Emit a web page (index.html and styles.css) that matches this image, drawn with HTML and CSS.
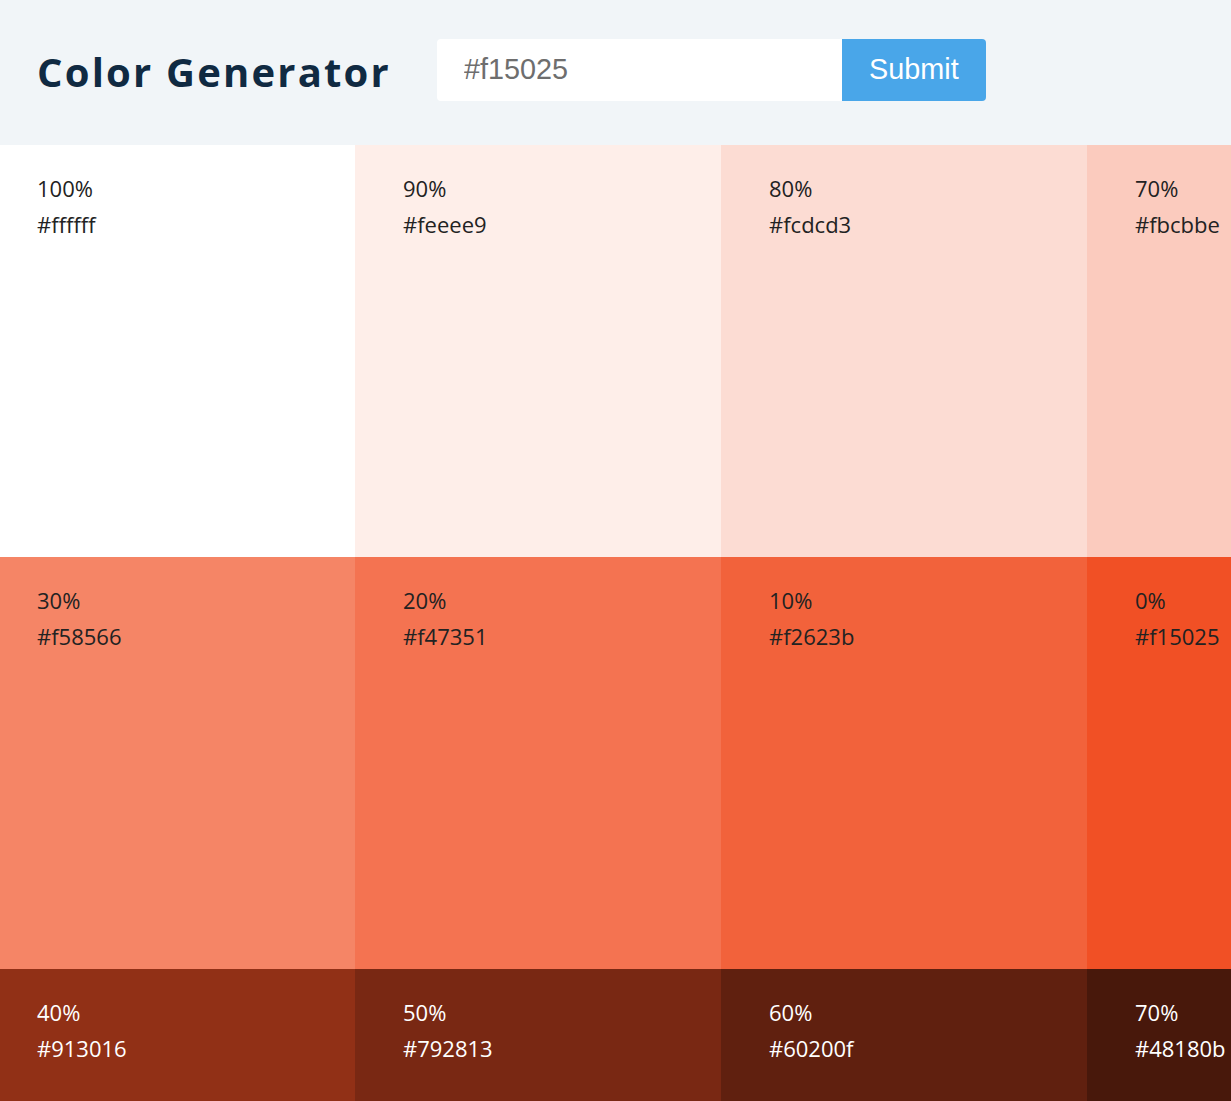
FILE: index.html
```html
<!DOCTYPE html>
<html>
<head>
<meta charset="utf-8">
<link rel="stylesheet" href="styles.css">
</head>
<body>
<section class="header">
  <h3 class="title">Color Generator</h3>
  <form class="form">
    <input class="field" type="text" placeholder="#f15025">
    <button class="btn" type="button">Submit</button>
  </form>
</section>
<section class="colors">
  <article class="color" style="background:#ffffff"><p>100%</p><p>#ffffff</p></article>
  <article class="color" style="background:#feeee9"><p>90%</p><p>#feeee9</p></article>
  <article class="color" style="background:#fcdcd3"><p>80%</p><p>#fcdcd3</p></article>
  <article class="color" style="background:#fbcbbe"><p>70%</p><p>#fbcbbe</p></article>
  <article class="color" style="background:#f58566"><p>30%</p><p>#f58566</p></article>
  <article class="color" style="background:#f47351"><p>20%</p><p>#f47351</p></article>
  <article class="color" style="background:#f2623b"><p>10%</p><p>#f2623b</p></article>
  <article class="color" style="background:#f15025"><p>0%</p><p>#f15025</p></article>
  <article class="color dark" style="background:#913016"><p>40%</p><p>#913016</p></article>
  <article class="color dark" style="background:#792813"><p>50%</p><p>#792813</p></article>
  <article class="color dark" style="background:#60200f"><p>60%</p><p>#60200f</p></article>
  <article class="color dark" style="background:#48180b"><p>70%</p><p>#48180b</p></article>
</section>
</body>
</html>
```
FILE: styles.css
```css
* { box-sizing: border-box; }
html, body { margin: 0; padding: 0; }
body {
  font-family: "Open Sans", "Noto Sans", sans-serif;
  color: #102a42;
  overflow: hidden;
  background: #fff;
}
.header {
  background: #f1f5f8;
  height: 145px;
  display: flex;
  align-items: center;
  padding-left: 37px;
}
.title {
  margin: -2px 46px 0 0;
  font-size: 40px;
  font-weight: 700;
  letter-spacing: 2.2px;
  color: #102a42;
  line-height: 1;
}
.form {
  display: flex;
  margin-top: -6px;
}
.field {
  width: 405px;
  height: 62px;
  border: none;
  border-radius: 4px 0 0 4px;
  background: #fff;
  padding: 0 0 0 27px;
  font-family: "Liberation Sans", Arial, sans-serif;
  font-size: 28.8px;
  outline: none;
}
.field::placeholder { color: #6e6e6e; opacity: 1; }
.btn {
  width: 144px;
  height: 62px;
  border: none;
  border-radius: 0 4px 4px 0;
  background: #49a6e9;
  color: #fff;
  font-family: "Liberation Sans", Arial, sans-serif;
  font-size: 28.8px;
  padding: 0;
}
.colors {
  display: grid;
  grid-template-columns: repeat(4, 366px);
  grid-auto-rows: 412px;
  margin-left: -11px;
  width: 1464px;
}
.color {
  padding: 25px 48px;
}
.color p {
  margin: 0;
  font-size: 22px;
  line-height: 36px;
  color: #222;
}
.color.dark p { color: #fff; }
```
